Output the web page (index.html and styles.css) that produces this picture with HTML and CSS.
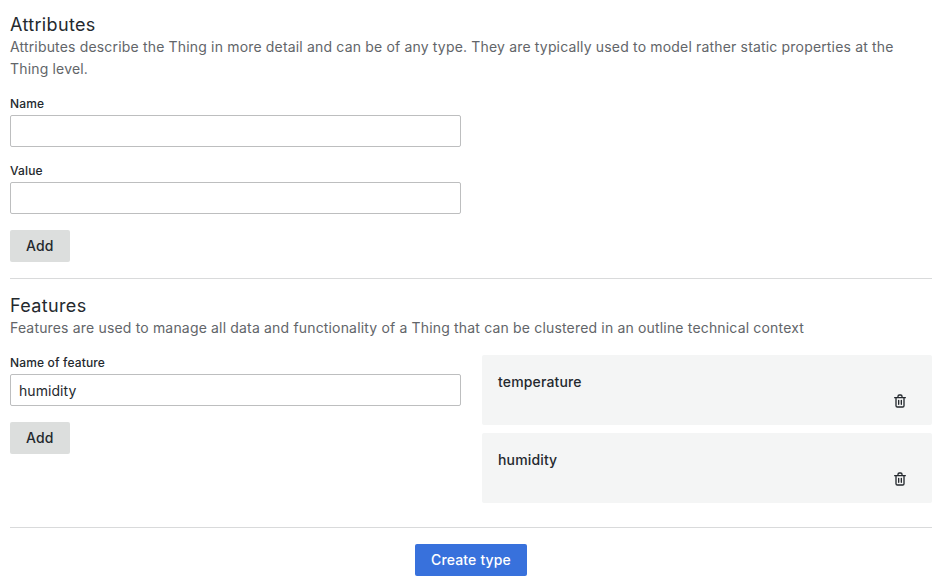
FILE: index.html
```html
<!DOCTYPE html>
<html lang="en">
<head>
<meta charset="utf-8">
<title>Create type</title>
<link rel="stylesheet" href="styles.css">
</head>
<body>
<form class="form">
  <section class="section attributes">
    <h3 class="title">Attributes</h3>
    <p class="description">Attributes describe the Thing in more detail and can be of any type. They are typically used to model rather static properties at the Thing level.</p>
    <div class="column">
      <label class="label" for="attr-name">Name</label>
      <input class="input" id="attr-name" type="text">
      <label class="label" for="attr-value">Value</label>
      <input class="input" id="attr-value" type="text">
      <button class="button secondary" type="button">Add</button>
    </div>
  </section>
  <section class="section features">
    <h3 class="title">Features</h3>
    <p class="description">Features are used to manage all data and functionality of a Thing that can be clustered in an outline technical context</p>
    <div class="columns">
      <div class="column">
        <label class="label" for="feature-name">Name of feature</label>
        <input class="input" id="feature-name" type="text" value="humidity">
        <button class="button secondary" type="button">Add</button>
      </div>
      <ul class="cards">
        <li class="card">
          <span class="card-name">temperature</span>
          <svg class="trash" viewBox="0 0 24 24"><path d="M10,18a1,1,0,0,0,1-1V11a1,1,0,0,0-2,0v6A1,1,0,0,0,10,18ZM20,6H16V5a3,3,0,0,0-3-3H11A3,3,0,0,0,8,5V6H4A1,1,0,0,0,4,8H5V19a3,3,0,0,0,3,3h8a3,3,0,0,0,3-3V8h1a1,1,0,0,0,0-2ZM10,5a1,1,0,0,1,1-1h2a1,1,0,0,1,1,1V6H10Zm7,14a1,1,0,0,1-1,1H8a1,1,0,0,1-1-1V8H17Zm-3-1a1,1,0,0,0,1-1V11a1,1,0,0,0-2,0v6A1,1,0,0,0,14,18Z"/></svg>
        </li>
        <li class="card">
          <span class="card-name">humidity</span>
          <svg class="trash" viewBox="0 0 24 24"><path d="M10,18a1,1,0,0,0,1-1V11a1,1,0,0,0-2,0v6A1,1,0,0,0,10,18ZM20,6H16V5a3,3,0,0,0-3-3H11A3,3,0,0,0,8,5V6H4A1,1,0,0,0,4,8H5V19a3,3,0,0,0,3,3h8a3,3,0,0,0,3-3V8h1a1,1,0,0,0,0-2ZM10,5a1,1,0,0,1,1-1h2a1,1,0,0,1,1,1V6H10Zm7,14a1,1,0,0,1-1,1H8a1,1,0,0,1-1-1V8H17Zm-3-1a1,1,0,0,0,1-1V11a1,1,0,0,0-2,0v6A1,1,0,0,0,14,18Z"/></svg>
        </li>
      </ul>
    </div>
  </section>
  <div class="actions"><button class="button primary" type="button">Create type</button></div>
</form>
</body>
</html>
```

FILE: styles.css
```css
* { box-sizing: border-box; }
body {
  margin: 0;
  background: #fff;
  color: #24292e;
  font: 400 14px/22px Inter, "Liberation Sans", sans-serif;
  letter-spacing: 0.15px;
}
.form { padding: 14px 11px 0 10px; }
.section { border-bottom: 1px solid #d9dadb; }
.attributes { height: 265px; }
.features { height: 249px; padding-top: 16px; }
.title { margin: 0; font-size: 18px; font-weight: 400; line-height: 22px; letter-spacing: 0.35px; }
.description { margin: 0 0 16px; color: #626569; letter-spacing: 0.17px; }
.columns { display: flex; justify-content: space-between; }
.column { width: 451px; }
.label { display: block; margin-bottom: 4px; font-size: 12px; font-weight: 500; line-height: 15px; }
.input {
  display: block;
  width: 100%;
  height: 32px;
  margin: 0 0 16px;
  padding: 0 8px;
  border: 1px solid #bdbebf;
  border-radius: 2px;
  background: #fff;
  color: inherit;
  font: inherit;
  letter-spacing: 0.05px;
}
.button {
  height: 32px;
  padding: 0 16px;
  border: 0;
  border-radius: 2px;
  font: 500 14px/32px Inter, "Liberation Sans", sans-serif;
  letter-spacing: 0.15px;
}
.secondary { background: #dcdedd; color: #24292e; }
.primary { background: #3871dc; color: #fff; }
.cards { display: flex; flex-direction: column; gap: 8px; width: 450px; margin: 0; padding: 0; list-style: none; }
.card { display: flex; justify-content: space-between; height: 70px; padding: 16px; border-radius: 2px; background: #f4f5f5; }
.card-name { font-weight: 500; }
.trash { width: 16px; height: 16px; margin: 22px 8px 0 0; fill: #24292e; }
.actions { display: flex; justify-content: center; padding-top: 16px; }
```
